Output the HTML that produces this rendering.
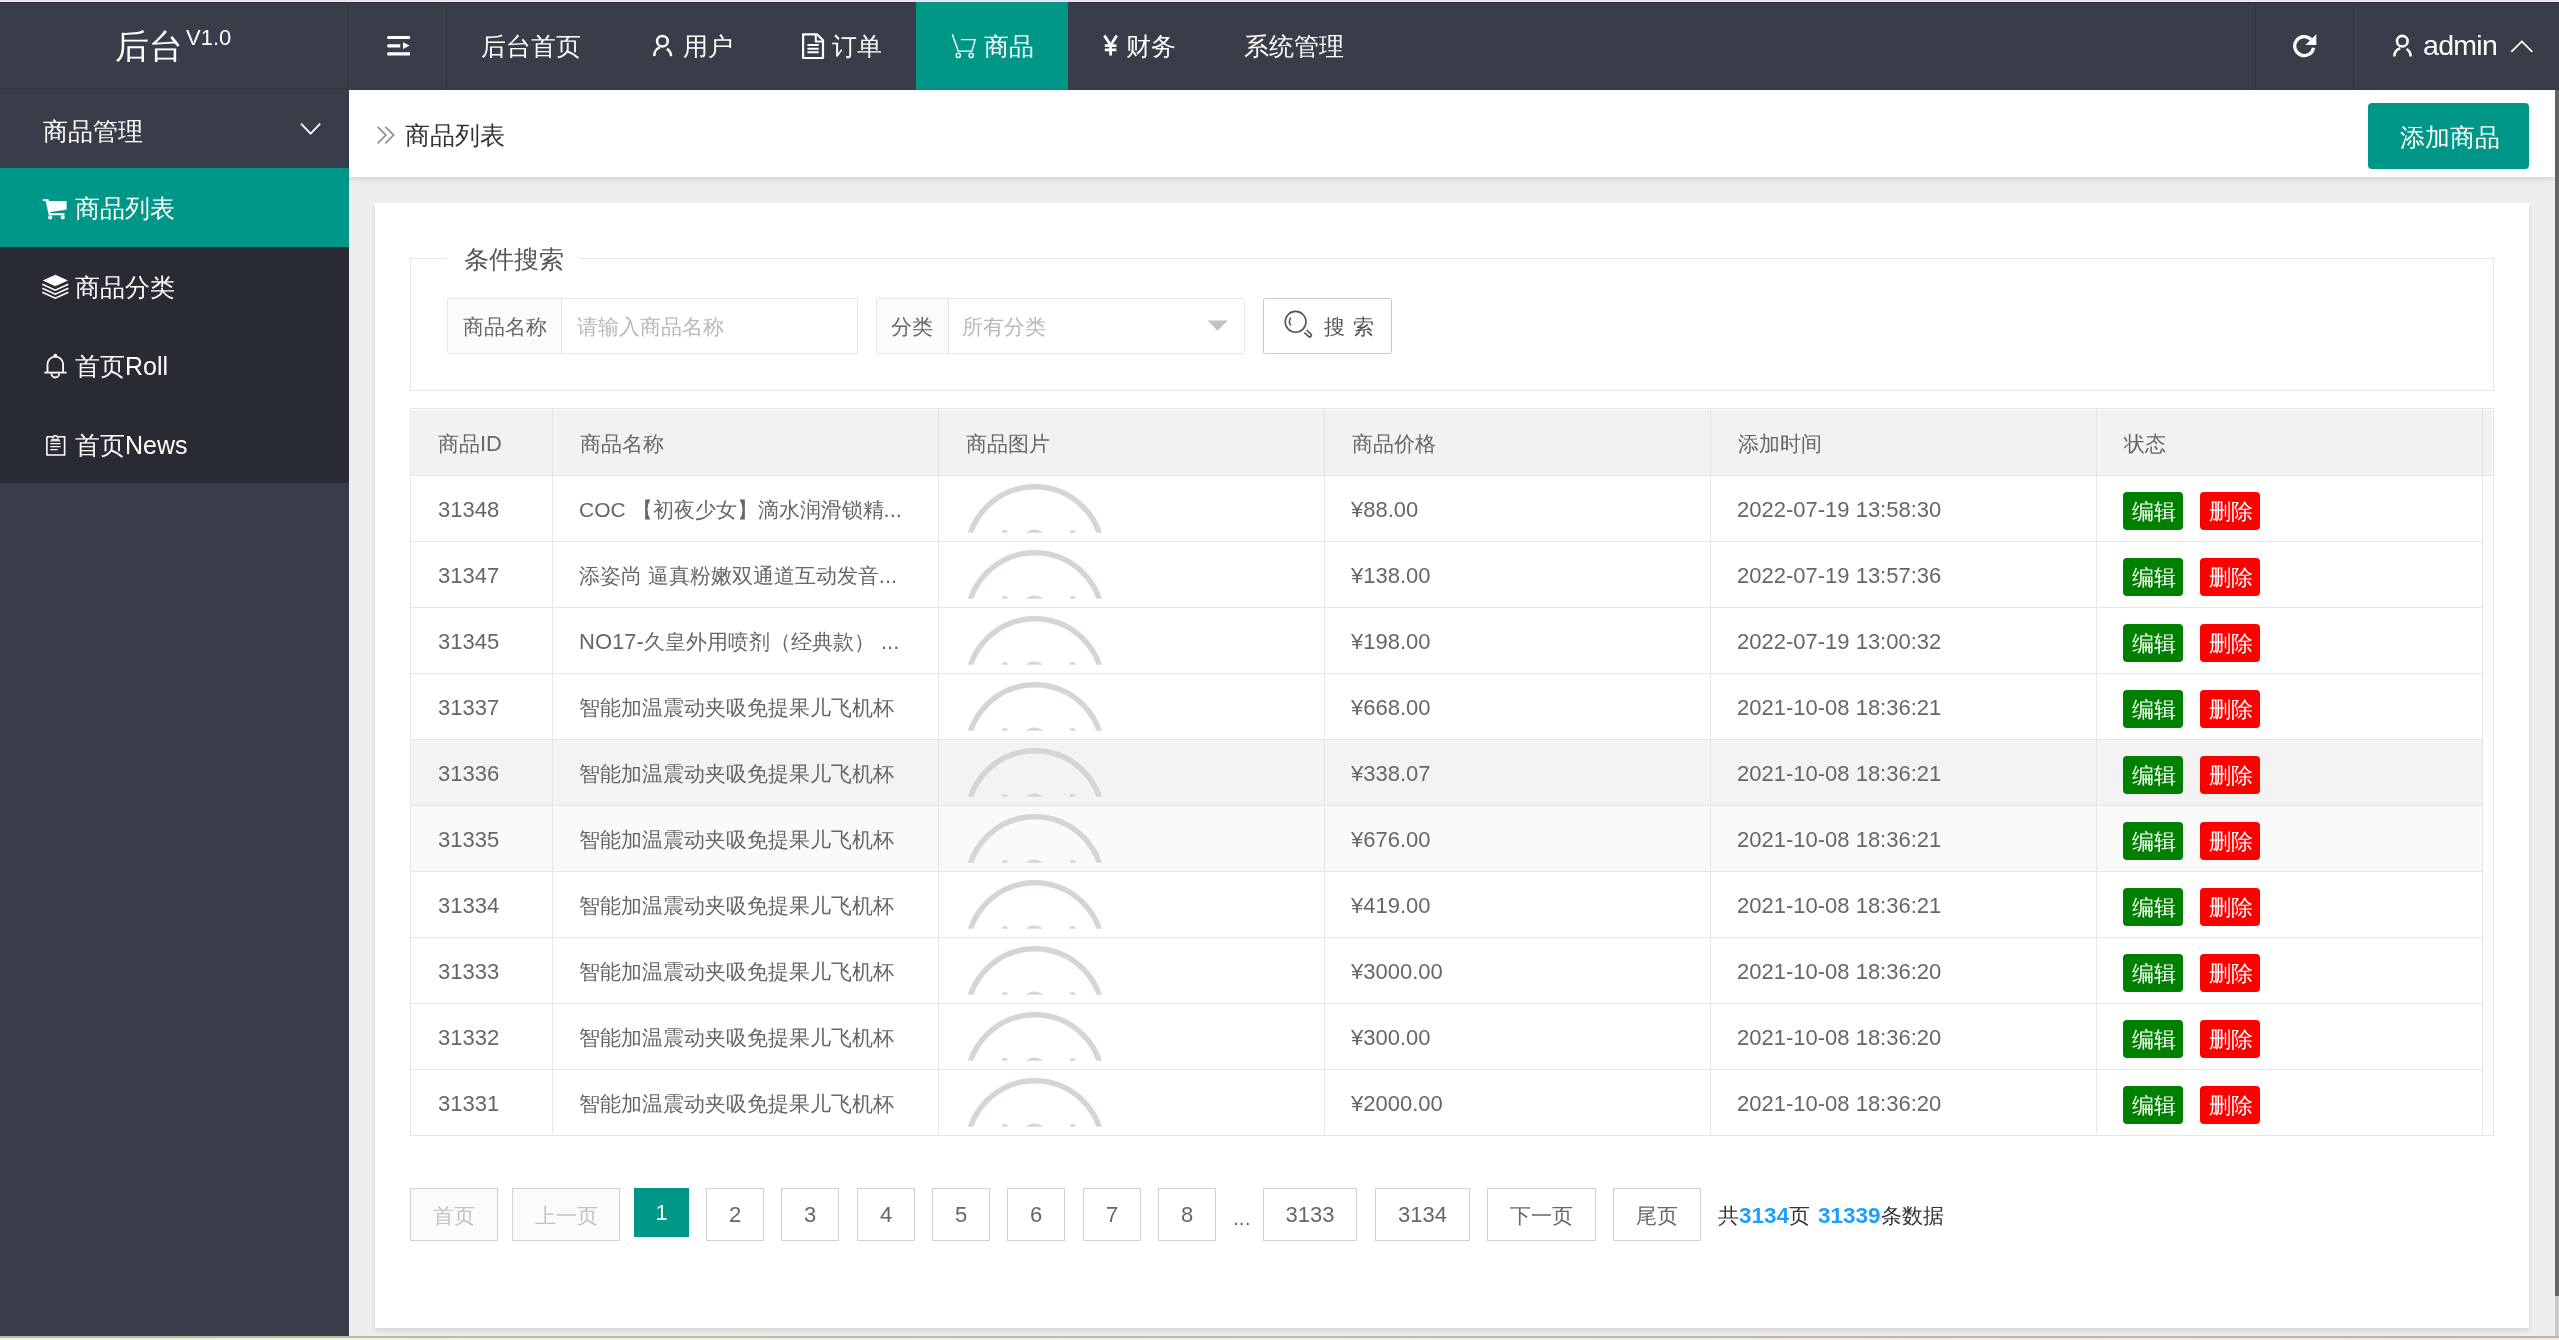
<!DOCTYPE html>
<html><head><meta charset="utf-8"><title>商品列表</title>
<style>
*{box-sizing:border-box;margin:0;padding:0}
html,body{width:2559px;height:1340px;overflow:hidden;background:#eeeeee;font-family:"Liberation Sans",sans-serif;position:relative}
.a{position:absolute;white-space:nowrap;will-change:transform}
svg{position:absolute;overflow:visible}
.ln{position:absolute;background:#e6e6e6}
.n{font-size:22px}
</style></head><body>
<div class="a" style="left:0px;top:0px;width:2559px;height:1px;background:#eee0f3;"></div>
<div class="a" style="left:0px;top:1px;width:2559px;height:1px;background:#f8e7f9;"></div>
<div class="a" style="left:0px;top:2px;width:2559px;height:88px;background:#393d49;"></div>
<div class="a" style="left:0px;top:2px;width:2559px;height:1px;background:#2d303b;"></div>
<div class="a" style="left:0px;top:90px;width:349px;height:1246px;background:#393d49;"></div>
<div class="a" style="left:2555px;top:90px;width:4px;height:1206px;background:#666;"></div>
<div class="a" style="left:2555px;top:1296px;width:4px;height:40px;background:#cbcbcb;"></div>
<div class="a" style="left:349px;top:90px;width:1px;height:1246px;background:#f2f2f2;"></div>
<div class="a" style="left:0px;top:1336px;width:2559px;height:2px;background:linear-gradient(90deg,#b5bca4,#babcb4 45%,#bdb4aa);"></div>
<div class="a" style="left:0px;top:1338px;width:2559px;height:2px;background:linear-gradient(90deg,#edf5d0,#f2f2e6 45%,#f9e8dc);"></div>
<div class="a" style="left:348px;top:2px;width:1px;height:86px;background:#31353f;"></div>
<div class="a" style="left:446px;top:2px;width:1px;height:88px;background:#31353f;"></div>
<div class="a" style="left:2255px;top:2px;width:1px;height:88px;background:#31353f;"></div>
<div class="a" style="left:2353px;top:2px;width:1px;height:88px;background:#31353f;"></div>
<div class="a" style="left:0px;top:88px;width:348px;height:1px;background:#31353f;"></div>
<div class="a" style="left:916px;top:2px;width:152px;height:88px;background:#009688;"></div>
<div class="a" style="left:115px;top:21.5px;font-size:34px;line-height:48px;color:#fff;">后台</div>
<div class="a" style="left:186px;top:26px;font-size:22px;line-height:24px;color:#fff;">V1.0</div>
<div class="a" style="left:481px;top:28px;font-size:25px;line-height:36px;color:#fff;">后台首页</div>
<div class="a" style="left:683px;top:28px;font-size:25px;line-height:36px;color:#fff;">用户</div>
<div class="a" style="left:832px;top:28px;font-size:25px;line-height:36px;color:#fff;">订单</div>
<div class="a" style="left:984px;top:28px;font-size:25px;line-height:36px;color:#fff;">商品</div>
<div class="a" style="left:1126px;top:28px;font-size:25px;line-height:36px;color:#fff;">财务</div>
<div class="a" style="left:1244px;top:28px;font-size:25px;line-height:36px;color:#fff;">系统管理</div>
<div class="a" style="left:2422.5px;top:27px;font-size:28.5px;line-height:36px;color:#fff;letter-spacing:-0.7px">admin</div>
<svg style="left:0;top:0" width="2559" height="90" viewBox="0 0 2559 90" fill="none" stroke="#fff">
<g stroke-width="3.2"><path d="M388.6 37.5H410M388.6 45.8H400.2M388.6 53.9H410"/></g><g fill="#fff" stroke="none"><circle cx="388.6" cy="37.5" r="1.6"/><circle cx="388.6" cy="45.8" r="1.6"/><circle cx="388.6" cy="53.9" r="1.6"/></g><path d="M403 42.2L409.6 45.6L403 49Z" fill="#fff" stroke="none"/><g stroke-width="2.5"><circle cx="662.4" cy="41.2" r="5.3"/><path d="M654.3 56.2A8.6 8.6 0 0 1 659.8 47.4M666.8 48.9A8.4 8.4 0 0 1 671 56.2"/></g><g stroke-width="2.2" stroke-linejoin="round"><path d="M803.1 34.3H817L823 40.3V58H803.1Z"/><path d="M815.8 34.3V41.6H823" stroke-width="2"/><path d="M807.4 45.1H818.7M807.4 48.7H818.7M807.4 52.3H818.7" stroke-width="2"/></g><g stroke-width="1.4" stroke-linejoin="round"><path d="M952.3 34.3L958.2 51.1H971.9L975.2 39.6H960.9"/><circle cx="958.3" cy="55.4" r="2.1"/><circle cx="971.2" cy="55.4" r="2.1"/></g><g stroke-width="2.8"><path d="M1104.4 35.5L1110.6 45.2L1116.8 35.5M1110.6 45V55.5M1104.8 45.6H1116.4M1104.8 49.8H1116.4"/></g><path d="M2311.2 39.6A9.5 9.5 0 1 0 2313.6 47.7" stroke-width="3.3"/><path d="M2316.3 34.3V45H2305.4Z" fill="#fff" stroke="none"/><g stroke-width="2.6"><circle cx="2402.3" cy="41.2" r="5.3"/><path d="M2394.3 56.4A8.6 8.6 0 0 1 2400.2 48.3M2406.6 49A8.6 8.6 0 0 1 2410.6 56.4"/></g><path d="M2511.3 51.8L2521.8 41.4L2532.3 51.8" stroke-width="1.8"/></svg>
<div class="a" style="left:0px;top:168px;width:349px;height:315px;background:#282b33;"></div>
<div class="a" style="left:0px;top:168px;width:349px;height:79px;background:#009688;"></div>
<div class="a" style="left:43px;top:113px;font-size:25px;line-height:36px;color:#fff;">商品管理</div>
<div class="a" style="left:75px;top:190px;font-size:25px;line-height:36px;color:#fff;">商品列表</div>
<div class="a" style="left:75px;top:269px;font-size:25px;line-height:36px;color:#fff;">商品分类</div>
<div class="a" style="left:75px;top:348px;font-size:25px;line-height:36px;color:#fff;">首页Roll</div>
<div class="a" style="left:75px;top:427px;font-size:25px;line-height:36px;color:#fff;">首页News</div>
<svg style="left:0;top:90px" width="349" height="400" viewBox="0 90 349 400" fill="none" stroke="#fff">
<path d="M301 123.6L310.6 133.6L320.2 123.6" stroke-width="1.8"/><g fill="#fff" stroke="none"><path d="M42.8 199.3H48.4L49.2 201.1H66.6V209.8L50 212L50.6 213.2H64.6V215.3H48.8L45.6 201.1H42.8Z"/><circle cx="50.2" cy="217.4" r="2.1"/><circle cx="62.7" cy="217.4" r="2.1"/></g><path d="M55.3 274.7L68 280.5L55.3 286.2L42.8 280.5Z" fill="#fff" stroke="none"/><g stroke-width="1.6" stroke-linejoin="miter"><path d="M42.3 284.2L55.3 290.2L68.3 284.2M42.3 288.2L55.3 294.2L68.3 288.2M42.3 292.2L55.3 298.2L68.3 292.2"/></g><g stroke-width="1.8"><path d="M47.5 372.6V364.5A7.8 7.8 0 0 1 63.1 364.5V372.6"/><path d="M44.4 372.6H66.6"/><path d="M51.4 373.6A3.9 3.9 0 0 0 59.2 373.6"/><circle cx="55.3" cy="355.6" r="1" fill="#fff"/></g><g stroke-width="1.6"><path d="M46.9 436.8H52.2M58.4 436.8H64.6V455H46.9V436.8"/><path d="M52.7 438.4A2.6 2.6 0 0 1 57.9 438.4" stroke-width="1.5"/><path d="M51.6 438.8H59L60.6 441.4H50Z" fill="#ddd" stroke="none"/><path d="M50.3 443.6H60.6M50.3 446.6H60.6M50.3 449.6H57.6" stroke-width="1.2"/></g></svg>
<div class="a" style="left:349px;top:90px;width:2206px;height:87px;background:#fff;box-shadow:0 2px 6px rgba(0,0,0,.13)"></div>
<div class="a" style="left:405px;top:117px;font-size:25px;line-height:36px;color:#333;">商品列表</div>
<svg style="left:360px;top:115px" width="50" height="40" viewBox="360 115 50 40" fill="none" stroke="#939393" stroke-width="1.8"><path d="M377.6 126.9L385.9 135.1L377.6 143.3M385.3 126.9L393.6 135.1L385.3 143.3"/></svg>
<div class="a" style="left:2368px;top:103px;width:161px;height:66px;background:#009688;border-radius:4px"></div>
<div class="a" style="left:2400px;top:119px;font-size:25px;line-height:36px;color:#fff;">添加商品</div>
<div class="a" style="left:375px;top:203px;width:2154px;height:1125px;background:#fff;box-shadow:0 3px 5px rgba(0,0,0,.10)"></div>
<div class="a" style="left:410px;top:258px;width:2084px;height:133px;background:transparent;border:1px solid #e6e6e6"></div>
<div class="a" style="left:447px;top:250px;width:133px;height:16px;background:#fff;"></div>
<div class="a" style="left:464px;top:241px;font-size:25px;line-height:36px;color:#555;">条件搜索</div>
<div class="a" style="left:447px;top:298px;width:411px;height:56px;background:#fff;border:1px solid #e6e6e6;border-radius:2px"></div>
<div class="a" style="left:448px;top:299px;width:114px;height:54px;background:#fbfbfb;border-right:1px solid #e6e6e6"></div>
<div class="a" style="left:463px;top:312px;font-size:21px;line-height:30px;color:#666;">商品名称</div>
<div class="a" style="left:577px;top:312px;font-size:21px;line-height:30px;color:#b8b8b8;">请输入商品名称</div>
<div class="a" style="left:876px;top:298px;width:369px;height:56px;background:#fff;border:1px solid #e6e6e6;border-radius:2px"></div>
<div class="a" style="left:877px;top:299px;width:72px;height:54px;background:#fbfbfb;border-right:1px solid #e6e6e6"></div>
<div class="a" style="left:891px;top:312px;font-size:21px;line-height:30px;color:#666;">分类</div>
<div class="a" style="left:962px;top:312px;font-size:21px;line-height:30px;color:#b8b8b8;">所有分类</div>
<svg style="left:1200px;top:315px" width="40" height="20" viewBox="1200 315 40 20"><path d="M1207.5 320.5H1227.6L1217.5 330.8Z" fill="#c2c2c2"/></svg>
<div class="a" style="left:1263px;top:298px;width:129px;height:56px;background:#fff;border:1px solid #c9c9c9;border-radius:2px"></div>
<svg style="left:1270px;top:300px" width="60" height="50" viewBox="1270 300 60 50" fill="none" stroke="#555" stroke-width="1.6"><circle cx="1295.6" cy="321.8" r="10.4"/><path d="M1290.8 317.6A7 7 0 0 0 1290.8 325.6" stroke-width="1.5"/><path d="M1304.3 332.6L1308.6 336.4A1.6 1.6 0 0 0 1310.9 334.1L1306.6 330"/></svg>
<div class="a" style="left:1324px;top:312px;font-size:21px;line-height:30px;color:#555;letter-spacing:1px">搜&nbsp;索</div>
<div class="a" style="left:410px;top:408px;width:2084px;height:728px;background:#fff;border:1px solid #e6e6e6"></div>
<div class="a" style="left:411px;top:410px;width:2081px;height:65px;background:#f2f2f2;"></div>
<div class="a" style="left:411px;top:740px;width:2071px;height:66px;background:#f3f3f3;"></div>
<div class="a" style="left:411px;top:806px;width:2071px;height:66px;background:#fafafa;"></div>
<div class="a" style="left:411px;top:475px;width:2082px;height:1px;background:#e6e6e6;"></div>
<div class="a" style="left:411px;top:541px;width:2071px;height:1px;background:#e6e6e6;"></div>
<div class="a" style="left:411px;top:607px;width:2071px;height:1px;background:#e6e6e6;"></div>
<div class="a" style="left:411px;top:673px;width:2071px;height:1px;background:#e6e6e6;"></div>
<div class="a" style="left:411px;top:739px;width:2071px;height:1px;background:#e6e6e6;"></div>
<div class="a" style="left:411px;top:805px;width:2071px;height:1px;background:#e6e6e6;"></div>
<div class="a" style="left:411px;top:871px;width:2071px;height:1px;background:#e6e6e6;"></div>
<div class="a" style="left:411px;top:937px;width:2071px;height:1px;background:#e6e6e6;"></div>
<div class="a" style="left:411px;top:1003px;width:2071px;height:1px;background:#e6e6e6;"></div>
<div class="a" style="left:411px;top:1069px;width:2071px;height:1px;background:#e6e6e6;"></div>
<div class="a" style="left:552px;top:409px;width:1px;height:725px;background:#e6e6e6;"></div>
<div class="a" style="left:938px;top:409px;width:1px;height:725px;background:#e6e6e6;"></div>
<div class="a" style="left:1324px;top:409px;width:1px;height:725px;background:#e6e6e6;"></div>
<div class="a" style="left:1710px;top:409px;width:1px;height:725px;background:#e6e6e6;"></div>
<div class="a" style="left:2096px;top:409px;width:1px;height:725px;background:#e6e6e6;"></div>
<div class="a" style="left:2482px;top:409px;width:1px;height:725px;background:#e6e6e6;"></div>
<div class="a" style="left:438px;top:429px;font-size:21px;line-height:30px;color:#666;">商品<span class="n">ID</span></div>
<div class="a" style="left:580px;top:429px;font-size:21px;line-height:30px;color:#666;">商品名称</div>
<div class="a" style="left:966px;top:429px;font-size:21px;line-height:30px;color:#666;">商品图片</div>
<div class="a" style="left:1352px;top:429px;font-size:21px;line-height:30px;color:#666;">商品价格</div>
<div class="a" style="left:1738px;top:429px;font-size:21px;line-height:30px;color:#666;">添加时间</div>
<div class="a" style="left:2124px;top:429px;font-size:21px;line-height:30px;color:#666;">状态</div>
<svg style="left:940px;top:476px" width="190" height="660" viewBox="940 476 190 660"><clipPath id="c0"><rect x="940" y="476" width="190" height="56.8"/></clipPath><g clip-path="url(#c0)" fill="#d8d4d5"><circle cx="1034.9" cy="554.4" r="67.7" fill="none" stroke="#d8d4d5" stroke-width="5.4"/><circle cx="1004.8" cy="533" r="3"/><circle cx="1072.6" cy="533" r="3"/><circle cx="1034.4" cy="542.5" r="13"/></g><clipPath id="c1"><rect x="940" y="542" width="190" height="56.8"/></clipPath><g clip-path="url(#c1)" fill="#d8d4d5"><circle cx="1034.9" cy="620.4" r="67.7" fill="none" stroke="#d8d4d5" stroke-width="5.4"/><circle cx="1004.8" cy="599" r="3"/><circle cx="1072.6" cy="599" r="3"/><circle cx="1034.4" cy="608.5" r="13"/></g><clipPath id="c2"><rect x="940" y="608" width="190" height="56.8"/></clipPath><g clip-path="url(#c2)" fill="#d8d4d5"><circle cx="1034.9" cy="686.4" r="67.7" fill="none" stroke="#d8d4d5" stroke-width="5.4"/><circle cx="1004.8" cy="665" r="3"/><circle cx="1072.6" cy="665" r="3"/><circle cx="1034.4" cy="674.5" r="13"/></g><clipPath id="c3"><rect x="940" y="674" width="190" height="56.8"/></clipPath><g clip-path="url(#c3)" fill="#d8d4d5"><circle cx="1034.9" cy="752.4" r="67.7" fill="none" stroke="#d8d4d5" stroke-width="5.4"/><circle cx="1004.8" cy="731" r="3"/><circle cx="1072.6" cy="731" r="3"/><circle cx="1034.4" cy="740.5" r="13"/></g><clipPath id="c4"><rect x="940" y="740" width="190" height="56.8"/></clipPath><g clip-path="url(#c4)" fill="#d8d4d5"><circle cx="1034.9" cy="818.4" r="67.7" fill="none" stroke="#d8d4d5" stroke-width="5.4"/><circle cx="1004.8" cy="797" r="3"/><circle cx="1072.6" cy="797" r="3"/><circle cx="1034.4" cy="806.5" r="13"/></g><clipPath id="c5"><rect x="940" y="806" width="190" height="56.8"/></clipPath><g clip-path="url(#c5)" fill="#d8d4d5"><circle cx="1034.9" cy="884.4" r="67.7" fill="none" stroke="#d8d4d5" stroke-width="5.4"/><circle cx="1004.8" cy="863" r="3"/><circle cx="1072.6" cy="863" r="3"/><circle cx="1034.4" cy="872.5" r="13"/></g><clipPath id="c6"><rect x="940" y="872" width="190" height="56.8"/></clipPath><g clip-path="url(#c6)" fill="#d8d4d5"><circle cx="1034.9" cy="950.4" r="67.7" fill="none" stroke="#d8d4d5" stroke-width="5.4"/><circle cx="1004.8" cy="929" r="3"/><circle cx="1072.6" cy="929" r="3"/><circle cx="1034.4" cy="938.5" r="13"/></g><clipPath id="c7"><rect x="940" y="938" width="190" height="56.8"/></clipPath><g clip-path="url(#c7)" fill="#d8d4d5"><circle cx="1034.9" cy="1016.4" r="67.7" fill="none" stroke="#d8d4d5" stroke-width="5.4"/><circle cx="1004.8" cy="995" r="3"/><circle cx="1072.6" cy="995" r="3"/><circle cx="1034.4" cy="1004.5" r="13"/></g><clipPath id="c8"><rect x="940" y="1004" width="190" height="56.8"/></clipPath><g clip-path="url(#c8)" fill="#d8d4d5"><circle cx="1034.9" cy="1082.4" r="67.7" fill="none" stroke="#d8d4d5" stroke-width="5.4"/><circle cx="1004.8" cy="1061" r="3"/><circle cx="1072.6" cy="1061" r="3"/><circle cx="1034.4" cy="1070.5" r="13"/></g><clipPath id="c9"><rect x="940" y="1070" width="190" height="56.8"/></clipPath><g clip-path="url(#c9)" fill="#d8d4d5"><circle cx="1034.9" cy="1148.4" r="67.7" fill="none" stroke="#d8d4d5" stroke-width="5.4"/><circle cx="1004.8" cy="1127" r="3"/><circle cx="1072.6" cy="1127" r="3"/><circle cx="1034.4" cy="1136.5" r="13"/></g></svg>
<div class="a" style="left:438px;top:494.7px;font-size:21px;line-height:30px;color:#666;"><span class="n">31348</span></div>
<div class="a" style="left:579px;top:494.7px;font-size:21px;line-height:30px;color:#666;"><span style="font-size:21px">COC</span> 【初夜少女】滴水润滑锁精<span class="n">...</span></div>
<div class="a" style="left:1351px;top:494.7px;font-size:21px;line-height:30px;color:#666;"><span class="n">¥88.00</span></div>
<div class="a" style="left:1737px;top:494.7px;font-size:21px;line-height:30px;color:#666;"><span class="n">2022-07-19 13:58:30</span></div>
<div class="a" style="left:2123px;top:492px;width:60px;height:38px;background:#008000;border-radius:4px"></div>
<div class="a" style="left:2200px;top:492px;width:60px;height:38px;background:#ff0000;border-radius:4px"></div>
<div class="a" style="left:2131.5px;top:497px;font-size:22px;line-height:30px;color:#fff;">编辑</div>
<div class="a" style="left:2208.5px;top:497px;font-size:22px;line-height:30px;color:#fff;">删除</div>
<div class="a" style="left:438px;top:560.7px;font-size:21px;line-height:30px;color:#666;"><span class="n">31347</span></div>
<div class="a" style="left:579px;top:560.7px;font-size:21px;line-height:30px;color:#666;">添姿尚 逼真粉嫩双通道互动发音<span class="n">...</span></div>
<div class="a" style="left:1351px;top:560.7px;font-size:21px;line-height:30px;color:#666;"><span class="n">¥138.00</span></div>
<div class="a" style="left:1737px;top:560.7px;font-size:21px;line-height:30px;color:#666;"><span class="n">2022-07-19 13:57:36</span></div>
<div class="a" style="left:2123px;top:558px;width:60px;height:38px;background:#008000;border-radius:4px"></div>
<div class="a" style="left:2200px;top:558px;width:60px;height:38px;background:#ff0000;border-radius:4px"></div>
<div class="a" style="left:2131.5px;top:563px;font-size:22px;line-height:30px;color:#fff;">编辑</div>
<div class="a" style="left:2208.5px;top:563px;font-size:22px;line-height:30px;color:#fff;">删除</div>
<div class="a" style="left:438px;top:626.7px;font-size:21px;line-height:30px;color:#666;"><span class="n">31345</span></div>
<div class="a" style="left:579px;top:626.7px;font-size:21px;line-height:30px;color:#666;"><span class="n">NO17-</span>久皇外用喷剂（经典款）<span class="n"> ...</span></div>
<div class="a" style="left:1351px;top:626.7px;font-size:21px;line-height:30px;color:#666;"><span class="n">¥198.00</span></div>
<div class="a" style="left:1737px;top:626.7px;font-size:21px;line-height:30px;color:#666;"><span class="n">2022-07-19 13:00:32</span></div>
<div class="a" style="left:2123px;top:624px;width:60px;height:38px;background:#008000;border-radius:4px"></div>
<div class="a" style="left:2200px;top:624px;width:60px;height:38px;background:#ff0000;border-radius:4px"></div>
<div class="a" style="left:2131.5px;top:629px;font-size:22px;line-height:30px;color:#fff;">编辑</div>
<div class="a" style="left:2208.5px;top:629px;font-size:22px;line-height:30px;color:#fff;">删除</div>
<div class="a" style="left:438px;top:692.7px;font-size:21px;line-height:30px;color:#666;"><span class="n">31337</span></div>
<div class="a" style="left:579px;top:692.7px;font-size:21px;line-height:30px;color:#666;">智能加温震动夹吸免提果儿飞机杯</div>
<div class="a" style="left:1351px;top:692.7px;font-size:21px;line-height:30px;color:#666;"><span class="n">¥668.00</span></div>
<div class="a" style="left:1737px;top:692.7px;font-size:21px;line-height:30px;color:#666;"><span class="n">2021-10-08 18:36:21</span></div>
<div class="a" style="left:2123px;top:690px;width:60px;height:38px;background:#008000;border-radius:4px"></div>
<div class="a" style="left:2200px;top:690px;width:60px;height:38px;background:#ff0000;border-radius:4px"></div>
<div class="a" style="left:2131.5px;top:695px;font-size:22px;line-height:30px;color:#fff;">编辑</div>
<div class="a" style="left:2208.5px;top:695px;font-size:22px;line-height:30px;color:#fff;">删除</div>
<div class="a" style="left:438px;top:758.7px;font-size:21px;line-height:30px;color:#666;"><span class="n">31336</span></div>
<div class="a" style="left:579px;top:758.7px;font-size:21px;line-height:30px;color:#666;">智能加温震动夹吸免提果儿飞机杯</div>
<div class="a" style="left:1351px;top:758.7px;font-size:21px;line-height:30px;color:#666;"><span class="n">¥338.07</span></div>
<div class="a" style="left:1737px;top:758.7px;font-size:21px;line-height:30px;color:#666;"><span class="n">2021-10-08 18:36:21</span></div>
<div class="a" style="left:2123px;top:756px;width:60px;height:38px;background:#008000;border-radius:4px"></div>
<div class="a" style="left:2200px;top:756px;width:60px;height:38px;background:#ff0000;border-radius:4px"></div>
<div class="a" style="left:2131.5px;top:761px;font-size:22px;line-height:30px;color:#fff;">编辑</div>
<div class="a" style="left:2208.5px;top:761px;font-size:22px;line-height:30px;color:#fff;">删除</div>
<div class="a" style="left:438px;top:824.7px;font-size:21px;line-height:30px;color:#666;"><span class="n">31335</span></div>
<div class="a" style="left:579px;top:824.7px;font-size:21px;line-height:30px;color:#666;">智能加温震动夹吸免提果儿飞机杯</div>
<div class="a" style="left:1351px;top:824.7px;font-size:21px;line-height:30px;color:#666;"><span class="n">¥676.00</span></div>
<div class="a" style="left:1737px;top:824.7px;font-size:21px;line-height:30px;color:#666;"><span class="n">2021-10-08 18:36:21</span></div>
<div class="a" style="left:2123px;top:822px;width:60px;height:38px;background:#008000;border-radius:4px"></div>
<div class="a" style="left:2200px;top:822px;width:60px;height:38px;background:#ff0000;border-radius:4px"></div>
<div class="a" style="left:2131.5px;top:827px;font-size:22px;line-height:30px;color:#fff;">编辑</div>
<div class="a" style="left:2208.5px;top:827px;font-size:22px;line-height:30px;color:#fff;">删除</div>
<div class="a" style="left:438px;top:890.7px;font-size:21px;line-height:30px;color:#666;"><span class="n">31334</span></div>
<div class="a" style="left:579px;top:890.7px;font-size:21px;line-height:30px;color:#666;">智能加温震动夹吸免提果儿飞机杯</div>
<div class="a" style="left:1351px;top:890.7px;font-size:21px;line-height:30px;color:#666;"><span class="n">¥419.00</span></div>
<div class="a" style="left:1737px;top:890.7px;font-size:21px;line-height:30px;color:#666;"><span class="n">2021-10-08 18:36:21</span></div>
<div class="a" style="left:2123px;top:888px;width:60px;height:38px;background:#008000;border-radius:4px"></div>
<div class="a" style="left:2200px;top:888px;width:60px;height:38px;background:#ff0000;border-radius:4px"></div>
<div class="a" style="left:2131.5px;top:893px;font-size:22px;line-height:30px;color:#fff;">编辑</div>
<div class="a" style="left:2208.5px;top:893px;font-size:22px;line-height:30px;color:#fff;">删除</div>
<div class="a" style="left:438px;top:956.7px;font-size:21px;line-height:30px;color:#666;"><span class="n">31333</span></div>
<div class="a" style="left:579px;top:956.7px;font-size:21px;line-height:30px;color:#666;">智能加温震动夹吸免提果儿飞机杯</div>
<div class="a" style="left:1351px;top:956.7px;font-size:21px;line-height:30px;color:#666;"><span class="n">¥3000.00</span></div>
<div class="a" style="left:1737px;top:956.7px;font-size:21px;line-height:30px;color:#666;"><span class="n">2021-10-08 18:36:20</span></div>
<div class="a" style="left:2123px;top:954px;width:60px;height:38px;background:#008000;border-radius:4px"></div>
<div class="a" style="left:2200px;top:954px;width:60px;height:38px;background:#ff0000;border-radius:4px"></div>
<div class="a" style="left:2131.5px;top:959px;font-size:22px;line-height:30px;color:#fff;">编辑</div>
<div class="a" style="left:2208.5px;top:959px;font-size:22px;line-height:30px;color:#fff;">删除</div>
<div class="a" style="left:438px;top:1022.7px;font-size:21px;line-height:30px;color:#666;"><span class="n">31332</span></div>
<div class="a" style="left:579px;top:1022.7px;font-size:21px;line-height:30px;color:#666;">智能加温震动夹吸免提果儿飞机杯</div>
<div class="a" style="left:1351px;top:1022.7px;font-size:21px;line-height:30px;color:#666;"><span class="n">¥300.00</span></div>
<div class="a" style="left:1737px;top:1022.7px;font-size:21px;line-height:30px;color:#666;"><span class="n">2021-10-08 18:36:20</span></div>
<div class="a" style="left:2123px;top:1020px;width:60px;height:38px;background:#008000;border-radius:4px"></div>
<div class="a" style="left:2200px;top:1020px;width:60px;height:38px;background:#ff0000;border-radius:4px"></div>
<div class="a" style="left:2131.5px;top:1025px;font-size:22px;line-height:30px;color:#fff;">编辑</div>
<div class="a" style="left:2208.5px;top:1025px;font-size:22px;line-height:30px;color:#fff;">删除</div>
<div class="a" style="left:438px;top:1088.7px;font-size:21px;line-height:30px;color:#666;"><span class="n">31331</span></div>
<div class="a" style="left:579px;top:1088.7px;font-size:21px;line-height:30px;color:#666;">智能加温震动夹吸免提果儿飞机杯</div>
<div class="a" style="left:1351px;top:1088.7px;font-size:21px;line-height:30px;color:#666;"><span class="n">¥2000.00</span></div>
<div class="a" style="left:1737px;top:1088.7px;font-size:21px;line-height:30px;color:#666;"><span class="n">2021-10-08 18:36:20</span></div>
<div class="a" style="left:2123px;top:1086px;width:60px;height:38px;background:#008000;border-radius:4px"></div>
<div class="a" style="left:2200px;top:1086px;width:60px;height:38px;background:#ff0000;border-radius:4px"></div>
<div class="a" style="left:2131.5px;top:1091px;font-size:22px;line-height:30px;color:#fff;">编辑</div>
<div class="a" style="left:2208.5px;top:1091px;font-size:22px;line-height:30px;color:#fff;">删除</div>
<div class="a" style="left:410px;top:1188px;width:88px;height:53px;background:#fbfbfb;border:1px solid #d2d2d2;text-align:center;font-size:21px;line-height:54px;color:#c2c2c2">首页</div>
<div class="a" style="left:512px;top:1188px;width:108px;height:53px;background:#fbfbfb;border:1px solid #d2d2d2;text-align:center;font-size:21px;line-height:54px;color:#c2c2c2">上一页</div>
<div class="a" style="left:706px;top:1188px;width:58px;height:53px;background:#fff;border:1px solid #d2d2d2;text-align:center;font-size:21px;line-height:51px;color:#666"><span class="n">2</span></div>
<div class="a" style="left:781px;top:1188px;width:58px;height:53px;background:#fff;border:1px solid #d2d2d2;text-align:center;font-size:21px;line-height:51px;color:#666"><span class="n">3</span></div>
<div class="a" style="left:857px;top:1188px;width:58px;height:53px;background:#fff;border:1px solid #d2d2d2;text-align:center;font-size:21px;line-height:51px;color:#666"><span class="n">4</span></div>
<div class="a" style="left:932px;top:1188px;width:58px;height:53px;background:#fff;border:1px solid #d2d2d2;text-align:center;font-size:21px;line-height:51px;color:#666"><span class="n">5</span></div>
<div class="a" style="left:1007px;top:1188px;width:58px;height:53px;background:#fff;border:1px solid #d2d2d2;text-align:center;font-size:21px;line-height:51px;color:#666"><span class="n">6</span></div>
<div class="a" style="left:1083px;top:1188px;width:58px;height:53px;background:#fff;border:1px solid #d2d2d2;text-align:center;font-size:21px;line-height:51px;color:#666"><span class="n">7</span></div>
<div class="a" style="left:1158px;top:1188px;width:58px;height:53px;background:#fff;border:1px solid #d2d2d2;text-align:center;font-size:21px;line-height:51px;color:#666"><span class="n">8</span></div>
<div class="a" style="left:1263px;top:1188px;width:94px;height:53px;background:#fff;border:1px solid #d2d2d2;text-align:center;font-size:21px;line-height:51px;color:#666"><span class="n">3133</span></div>
<div class="a" style="left:1375px;top:1188px;width:95px;height:53px;background:#fff;border:1px solid #d2d2d2;text-align:center;font-size:21px;line-height:51px;color:#666"><span class="n">3134</span></div>
<div class="a" style="left:1487px;top:1188px;width:109px;height:53px;background:#fff;border:1px solid #d2d2d2;text-align:center;font-size:21px;line-height:54px;color:#666">下一页</div>
<div class="a" style="left:1613px;top:1188px;width:88px;height:53px;background:#fff;border:1px solid #d2d2d2;text-align:center;font-size:21px;line-height:54px;color:#666">尾页</div>
<div class="a" style="left:634px;top:1188px;width:55px;height:49px;background:#009688;text-align:center;font-size:22px;line-height:49px;color:#fff">1</div>
<div class="a" style="left:1233px;top:1203px;font-size:21px;line-height:30px;color:#666;">...</div>
<div class="a" style="left:1718px;top:1201px;font-size:21px;line-height:30px;color:#333;">共<b style="color:#1e9fff;font-size:22.5px">3134</b>页<b style="color:#1e9fff;font-size:22.5px;margin-left:8px">31339</b>条数据</div>
</body></html>
